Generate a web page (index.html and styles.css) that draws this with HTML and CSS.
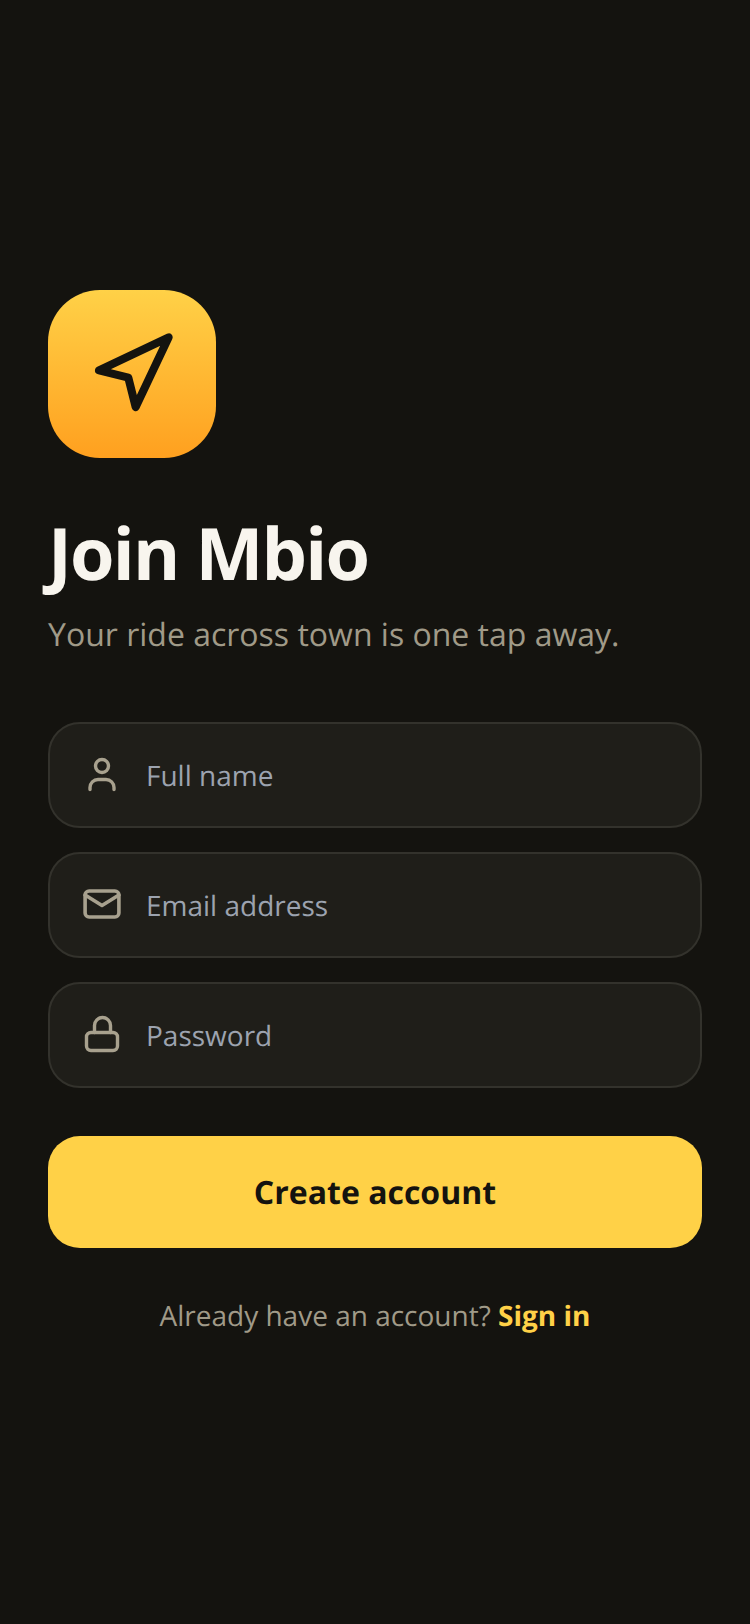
FILE: index.html
```html
<!DOCTYPE html>
<html lang="en">
<head>
<meta charset="utf-8">
<title>Join Mbio</title>
<link rel="stylesheet" href="styles.css">
</head>
<body>
<main class="screen">
  <div class="logo">
    <svg class="logo-icon" viewBox="0 0 24 24" fill="none" stroke="currentColor" stroke-width="2.2" stroke-linecap="round" stroke-linejoin="round"><polygon points="3 11 22 2 13 21 11 13 3 11"/></svg>
  </div>
  <h1 class="title">Join Mbio</h1>
  <p class="subtitle">Your ride across town is one tap away.</p>
  <form class="fields">
    <label class="field">
      <svg class="field-icon" viewBox="0 0 40 40" fill="none" stroke="currentColor" stroke-width="3.4" stroke-linecap="round" stroke-linejoin="round"><circle cx="20" cy="11" r="6.5"/><path d="M8 34.5v-2a8 8 0 0 1 8-8h8a8 8 0 0 1 8 8v2"/></svg>
      <input class="field-input" type="text" placeholder="Full name">
    </label>
    <label class="field">
      <svg class="field-icon" viewBox="0 0 40 40" fill="none" stroke="currentColor" stroke-width="3.6" stroke-linecap="round" stroke-linejoin="round"><rect x="3.100" y="6" width="33.800" height="26" rx="4"/><path d="M3.100 10 20 20.500 36.900 10"/></svg>
      <input class="field-input" type="email" placeholder="Email address">
    </label>
    <label class="field">
      <svg class="field-icon" viewBox="0 0 40 40" fill="none" stroke="currentColor" stroke-width="3.4" stroke-linecap="round" stroke-linejoin="round"><rect x="4.500" y="17.500" width="31" height="18" rx="4.500"/><path d="M12.500 17.500v-7a8 8 0 0 1 16 0v7"/></svg>
      <input class="field-input" type="password" placeholder="Password">
    </label>
  </form>
  <button class="submit" type="button">Create account</button>
  <p class="footer">Already have an account? <a class="footer-link" href="#">Sign in</a></p>
</main>
</body>
</html>
```

FILE: styles.css
```css
* { box-sizing: border-box; }
html, body { margin: 0; height: 100%; }
body {
  background: #14130f;
  font-family: "Open Sans", sans-serif;
  color: #f8f5ee;
  text-rendering: geometricPrecision;
}
.screen {
  min-height: 1624px;
  padding: 0 48px;
  display: flex;
  flex-direction: column;
  justify-content: center;
}
.logo {
  width: 168px;
  height: 168px;
  border-radius: 52px;
  background: linear-gradient(180deg, #ffd147 0%, #ffa01f 100%);
  display: flex;
  align-items: center;
  justify-content: center;
  color: #14130f;
}
.logo-icon { width: 88px; height: 88px; }
.title {
  margin: 49px 0 0;
  font-size: 72px;
  line-height: 92px;
  font-weight: 700;
  letter-spacing: -1.8px;
}
.subtitle {
  margin: 14px 0 0;
  font-size: 32px;
  line-height: 44px;
  color: #a09a88;
}
.fields {
  margin-top: 65px;
  display: flex;
  flex-direction: column;
  gap: 24px;
}
.field {
  height: 106px;
  padding: 0 32px;
  display: flex;
  align-items: center;
  gap: 24px;
  background: #1f1e19;
  border: 2px solid #33322c;
  border-radius: 32px;
}
.field-icon { width: 40px; height: 40px; flex: none; color: #a8a18e; }
.field-input {
  flex: 1;
  min-width: 0;
  border: 0;
  padding: 2px 0 0;
  outline: 0;
  background: transparent;
  font: 400 28px "Open Sans", sans-serif;
  text-rendering: geometricPrecision;
  color: #f8f5ee;
}
.field-input::placeholder { color: #9ca3af; opacity: 1; }
.submit {
  margin-top: 48px;
  height: 112px;
  padding: 2px 0 0;
  border: 0;
  border-radius: 32px;
  background: #ffd147;
  color: #14130f;
  font: 700 32px "Open Sans", sans-serif;
  text-rendering: geometricPrecision;
}
.footer {
  margin: 49px 0 0;
  text-align: center;
  font-size: 28px;
  line-height: 38px;
  color: #a09a88;
}
.footer-link { color: #ffd147; font-weight: 700; text-decoration: none; }
```
